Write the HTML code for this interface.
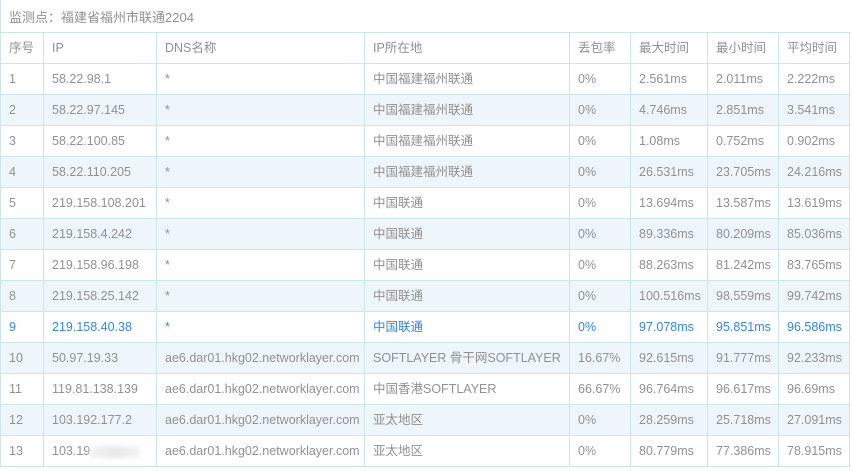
<!DOCTYPE html>
<html><head><meta charset="utf-8"><style>
body{margin:0;background:#fff;width:852px;height:471px;overflow:hidden;font-family:"Liberation Sans","Noto Sans CJK SC",sans-serif;font-size:12.5px;color:#919191}
.wrap{position:absolute;left:0;top:0;width:849px;border-left:1px solid #c9e7e6}
.title{height:32px;line-height:35px;padding-left:8px;font-size:13px;color:#919191}
table{border-collapse:collapse;table-layout:fixed;width:849px;margin-left:-1px}
td{border:1px solid #c9e7e6;height:30px;padding:0 0 0 8px;white-space:nowrap;overflow:hidden;line-height:30px}
tr.e td{background:#eef6fc}
tr.h td{color:#2f86f0}
.blur{display:inline-block;width:50px;height:12px;background:linear-gradient(90deg,#f4f4f4,#e8e8e8,#f4f4f4);filter:blur(2px);vertical-align:middle}
</style></head><body><div class="wrap">
<div class="title">监测点：福建省福州市联通2204</div>
<table>
<colgroup><col style="width:43px"><col style="width:113px"><col style="width:208px"><col style="width:205px"><col style="width:61px"><col style="width:77px"><col style="width:71px"><col style="width:71px"></colgroup>
<tr><td>序号</td><td>IP</td><td>DNS名称</td><td>IP所在地</td><td>丢包率</td><td>最大时间</td><td>最小时间</td><td>平均时间</td></tr>
<tr><td>1</td><td>58.22.98.1</td><td>*</td><td>中国福建福州联通</td><td>0%</td><td>2.561ms</td><td>2.011ms</td><td>2.222ms</td></tr>
<tr class="e"><td>2</td><td>58.22.97.145</td><td>*</td><td>中国福建福州联通</td><td>0%</td><td>4.746ms</td><td>2.851ms</td><td>3.541ms</td></tr>
<tr><td>3</td><td>58.22.100.85</td><td>*</td><td>中国福建福州联通</td><td>0%</td><td>1.08ms</td><td>0.752ms</td><td>0.902ms</td></tr>
<tr class="e"><td>4</td><td>58.22.110.205</td><td>*</td><td>中国福建福州联通</td><td>0%</td><td>26.531ms</td><td>23.705ms</td><td>24.216ms</td></tr>
<tr><td>5</td><td>219.158.108.201</td><td>*</td><td>中国联通</td><td>0%</td><td>13.694ms</td><td>13.587ms</td><td>13.619ms</td></tr>
<tr class="e"><td>6</td><td>219.158.4.242</td><td>*</td><td>中国联通</td><td>0%</td><td>89.336ms</td><td>80.209ms</td><td>85.036ms</td></tr>
<tr><td>7</td><td>219.158.96.198</td><td>*</td><td>中国联通</td><td>0%</td><td>88.263ms</td><td>81.242ms</td><td>83.765ms</td></tr>
<tr class="e"><td>8</td><td>219.158.25.142</td><td>*</td><td>中国联通</td><td>0%</td><td>100.516ms</td><td>98.559ms</td><td>99.742ms</td></tr>
<tr class="h"><td>9</td><td>219.158.40.38</td><td>*</td><td>中国联通</td><td>0%</td><td>97.078ms</td><td>95.851ms</td><td>96.586ms</td></tr>
<tr class="e"><td>10</td><td>50.97.19.33</td><td>ae6.dar01.hkg02.networklayer.com</td><td>SOFTLAYER 骨干网SOFTLAYER</td><td>16.67%</td><td>92.615ms</td><td>91.777ms</td><td>92.233ms</td></tr>
<tr><td>11</td><td>119.81.138.139</td><td>ae6.dar01.hkg02.networklayer.com</td><td>中国香港SOFTLAYER</td><td>66.67%</td><td>96.764ms</td><td>96.617ms</td><td>96.69ms</td></tr>
<tr class="e"><td>12</td><td>103.192.177.2</td><td>ae6.dar01.hkg02.networklayer.com</td><td>亚太地区</td><td>0%</td><td>28.259ms</td><td>25.718ms</td><td>27.091ms</td></tr>
<tr><td>13</td><td>103.19<span class="blur"></span></td><td>ae6.dar01.hkg02.networklayer.com</td><td>亚太地区</td><td>0%</td><td>80.779ms</td><td>77.386ms</td><td>78.915ms</td></tr>
</table></div></body></html>
